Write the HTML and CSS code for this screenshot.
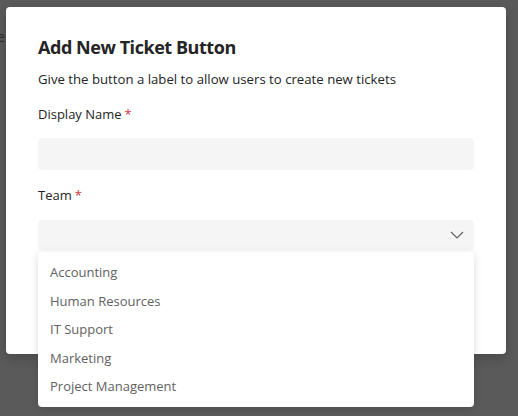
FILE: index.html
```html
<!DOCTYPE html>
<html>
<head>
<meta charset="utf-8">
<link rel="stylesheet" href="styles.css">
</head>
<body>
<div class="backdrop">
  <div class="bg-text">e</div>
  <div class="dialog">
    <h1 class="title">Add New Ticket Button</h1>
    <p class="subtitle">Give the button a label to allow users to create new tickets</p>
    <div class="field">
      <label class="label">Display Name<span class="req">*</span></label>
      <div class="input"></div>
    </div>
    <div class="field team">
      <label class="label">Team<span class="req">*</span></label>
      <div class="select">
        <svg class="chev" width="14" height="8" viewBox="0 0 14 8"><path d="M1 1 L7 7 L13 1" fill="none" stroke="#616161" stroke-width="1.2"/></svg>
      </div>
    </div>
  </div>
  <ul class="menu">
    <li>Accounting</li>
    <li>Human Resources</li>
    <li>IT Support</li>
    <li>Marketing</li>
    <li>Project Management</li>
  </ul>
</div>
</body>
</html>
```
FILE: styles.css
```css
* { box-sizing: border-box; }
html, body { margin: 0; padding: 0; }
body {
  width: 518px;
  height: 416px;
  overflow: hidden;
  background: #5a5a5a;
  font-family: "Open Sans", "Noto Sans", sans-serif;
}
.backdrop {
  position: relative;
  width: 518px;
  height: 416px;
  padding: 7px 12px 0 6px;
}
.bg-text {
  position: absolute;
  left: -3px;
  top: 27px;
  color: #2a2a2a;
  font-size: 14px;
}
.dialog {
  background: #fff;
  border-radius: 4px;
  width: 500px;
  height: 347px;
  padding: 28px 32px 0 32px;
  box-shadow: 0 4px 12px rgba(0,0,0,0.2);
}
.title {
  margin: 0;
  font-size: 18px;
  font-weight: 700;
  color: #242424;
  line-height: 24px;
  letter-spacing: -0.45px;
}
.subtitle {
  margin: 10px 0 0 0;
  font-size: 13.2px;
  line-height: 20px;
  color: #242424;
}
.field { margin-top: 15px; }
.label {
  display: block;
  font-size: 13px;
  line-height: 20px;
  color: #242424;
}
.req { color: #d13438; margin-left: 3px; }
.input {
  margin-top: 14px;
  height: 32px;
  background: #f5f5f5;
  border-radius: 4px;
}
.team { margin-top: 15px; }
.select {
  margin-top: 15px;
  height: 30px;
  background: #f5f5f5;
  border-radius: 4px;
  display: flex;
  align-items: center;
  justify-content: flex-end;
  padding-right: 10px;
}
.chev { display: block; }
.menu {
  position: absolute;
  left: 38px;
  top: 252px;
  width: 436px;
  height: 155px;
  margin: 0;
  padding: 6px 0 0 0;
  list-style: none;
  background: #fff;
  border-radius: 4px;
  box-shadow: 0 2px 8px rgba(0,0,0,0.14);
}
.menu li {
  height: 28.5px;
  line-height: 28.5px;
  padding-left: 12px;
  font-size: 13px;
  color: #616161;
}
```
